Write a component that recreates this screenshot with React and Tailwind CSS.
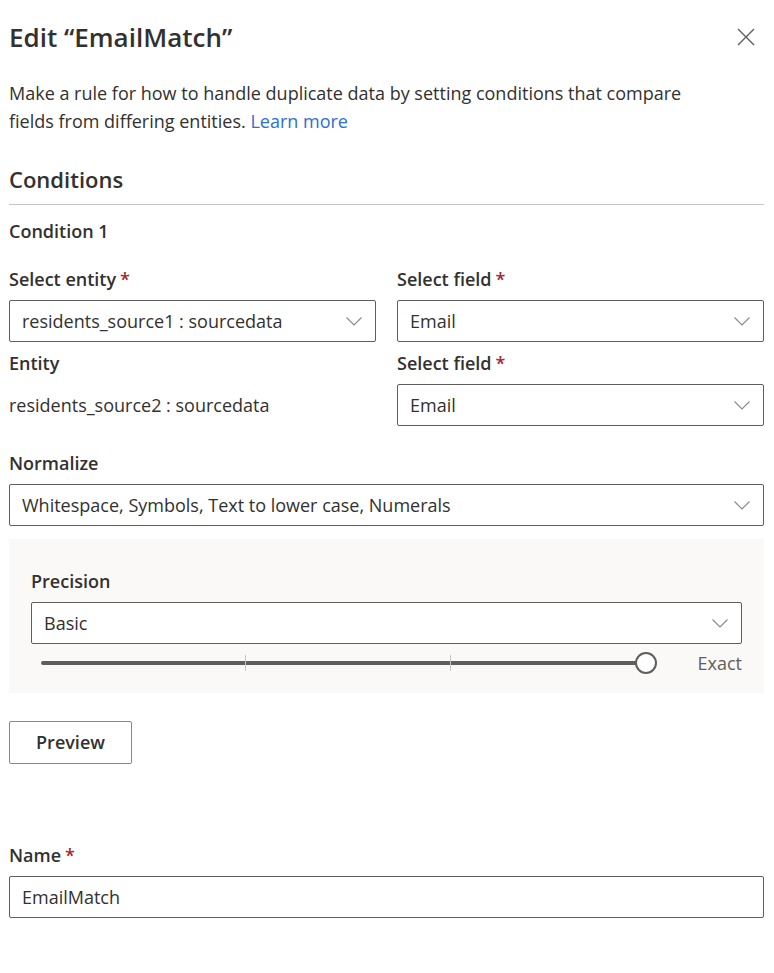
import React from "react";

const Chevron = () => (
  <svg width="16" height="9" viewBox="0 0 16 9" fill="none" className="shrink-0">
    <path d="M0.5 0.5 L8 8 L15.5 0.5" stroke="#8a8886" strokeWidth="1.1" />
  </svg>
);

const Label = ({ children, required }) => (
  <div className="text-[18px] font-semibold leading-[26px] text-[#323130]">
    {children}
    {required && <span className="text-[#a4262c] ml-1">*</span>}
  </div>
);

const Dropdown = ({ value }) => (
  <div className="flex items-center justify-between h-[42px] border border-[#605e5c] rounded-[2px] bg-white pl-3 pr-[13px] text-[18px] text-[#323130]">
    <span>{value}</span>
    <Chevron />
  </div>
);

const PrecisionSlider = () => (
  <div className="flex items-center h-[38px] pl-[10px]">
    <div className="relative flex-1 h-[4px] bg-[#605e5c] rounded-full mr-[2px]">
      <div className="absolute left-[33.8%] top-[-6px] w-px h-[16px] bg-[#c8c6c4]" />
      <div className="absolute left-[67.7%] top-[-6px] w-px h-[16px] bg-[#c8c6c4]" />
      <div className="absolute right-[-11px] top-[-9px] w-[22px] h-[22px] rounded-full bg-white border-2 border-[#605e5c]" />
    </div>
    <span className="ml-[50px] text-[18px] text-[#605e5c]">Exact</span>
  </div>
);

export default function App() {
  return (
    <div className="w-[774px] min-h-[973px] bg-white text-[#323130] pl-[9px] pr-[10px] pt-[18px]" style={{ fontFamily: '"Segoe UI", "Open Sans", sans-serif' }}>
      <div className="flex items-center justify-between h-[38px]">
        <h1 className="text-[26px] font-semibold">Edit “EmailMatch”</h1>
        <svg width="18" height="18" viewBox="0 0 18 18" className="mr-[9px]">
          <path d="M1 1 L17 17 M17 1 L1 17" stroke="#605e5c" strokeWidth="1.4" />
        </svg>
      </div>

      <p className="mt-[23px] text-[18px] leading-[28px] w-[690px]">
        Make a rule for how to handle duplicate data by setting conditions that compare fields from differing entities.{" "}
        <a className="text-[#2b6fd6]">Learn more</a>
      </p>

      <h2 className="mt-[29px] text-[22px] font-semibold leading-[30px]">Conditions</h2>
      <div className="mt-[10px] h-px bg-[#c8c6c4]" />

      <div className="mt-[13px] text-[18px] font-semibold leading-[26px]">Condition 1</div>

      <div className="mt-[22px] grid grid-cols-2 gap-x-[21px]">
        <div>
          <Label required>Select entity</Label>
          <div className="mt-[8px]"><Dropdown value="residents_source1 : sourcedata" /></div>
          <div className="mt-[8px]"><Label>Entity</Label></div>
          <div className="mt-[16px] text-[18px] leading-[26px]">residents_source2 : sourcedata</div>
        </div>
        <div>
          <Label required>Select field</Label>
          <div className="mt-[8px]"><Dropdown value="Email" /></div>
          <div className="mt-[8px]"><Label required>Select field</Label></div>
          <div className="mt-[8px]"><Dropdown value="Email" /></div>
        </div>
      </div>

      <div className="mt-[24px]"><Label>Normalize</Label></div>
      <div className="mt-[8px]"><Dropdown value="Whitespace, Symbols, Text to lower case, Numerals" /></div>

      <div className="mt-[13px] bg-[#faf9f8] px-[22px] pt-[29px] pb-[11px]">
        <Label>Precision</Label>
        <div className="mt-[8px]"><Dropdown value="Basic" /></div>
        <PrecisionSlider />
      </div>

      <button className="mt-[28px] h-[43px] w-[123px] border border-[#8a8886] rounded-[2px] bg-white text-[18px] font-semibold text-[#323130]">
        Preview
      </button>

      <div className="mt-[78px]"><Label required>Name</Label></div>
      <div className="mt-[8px] flex items-center h-[42px] border border-[#605e5c] rounded-[2px] pl-3 text-[18px]">EmailMatch</div>
    </div>
  );
}
